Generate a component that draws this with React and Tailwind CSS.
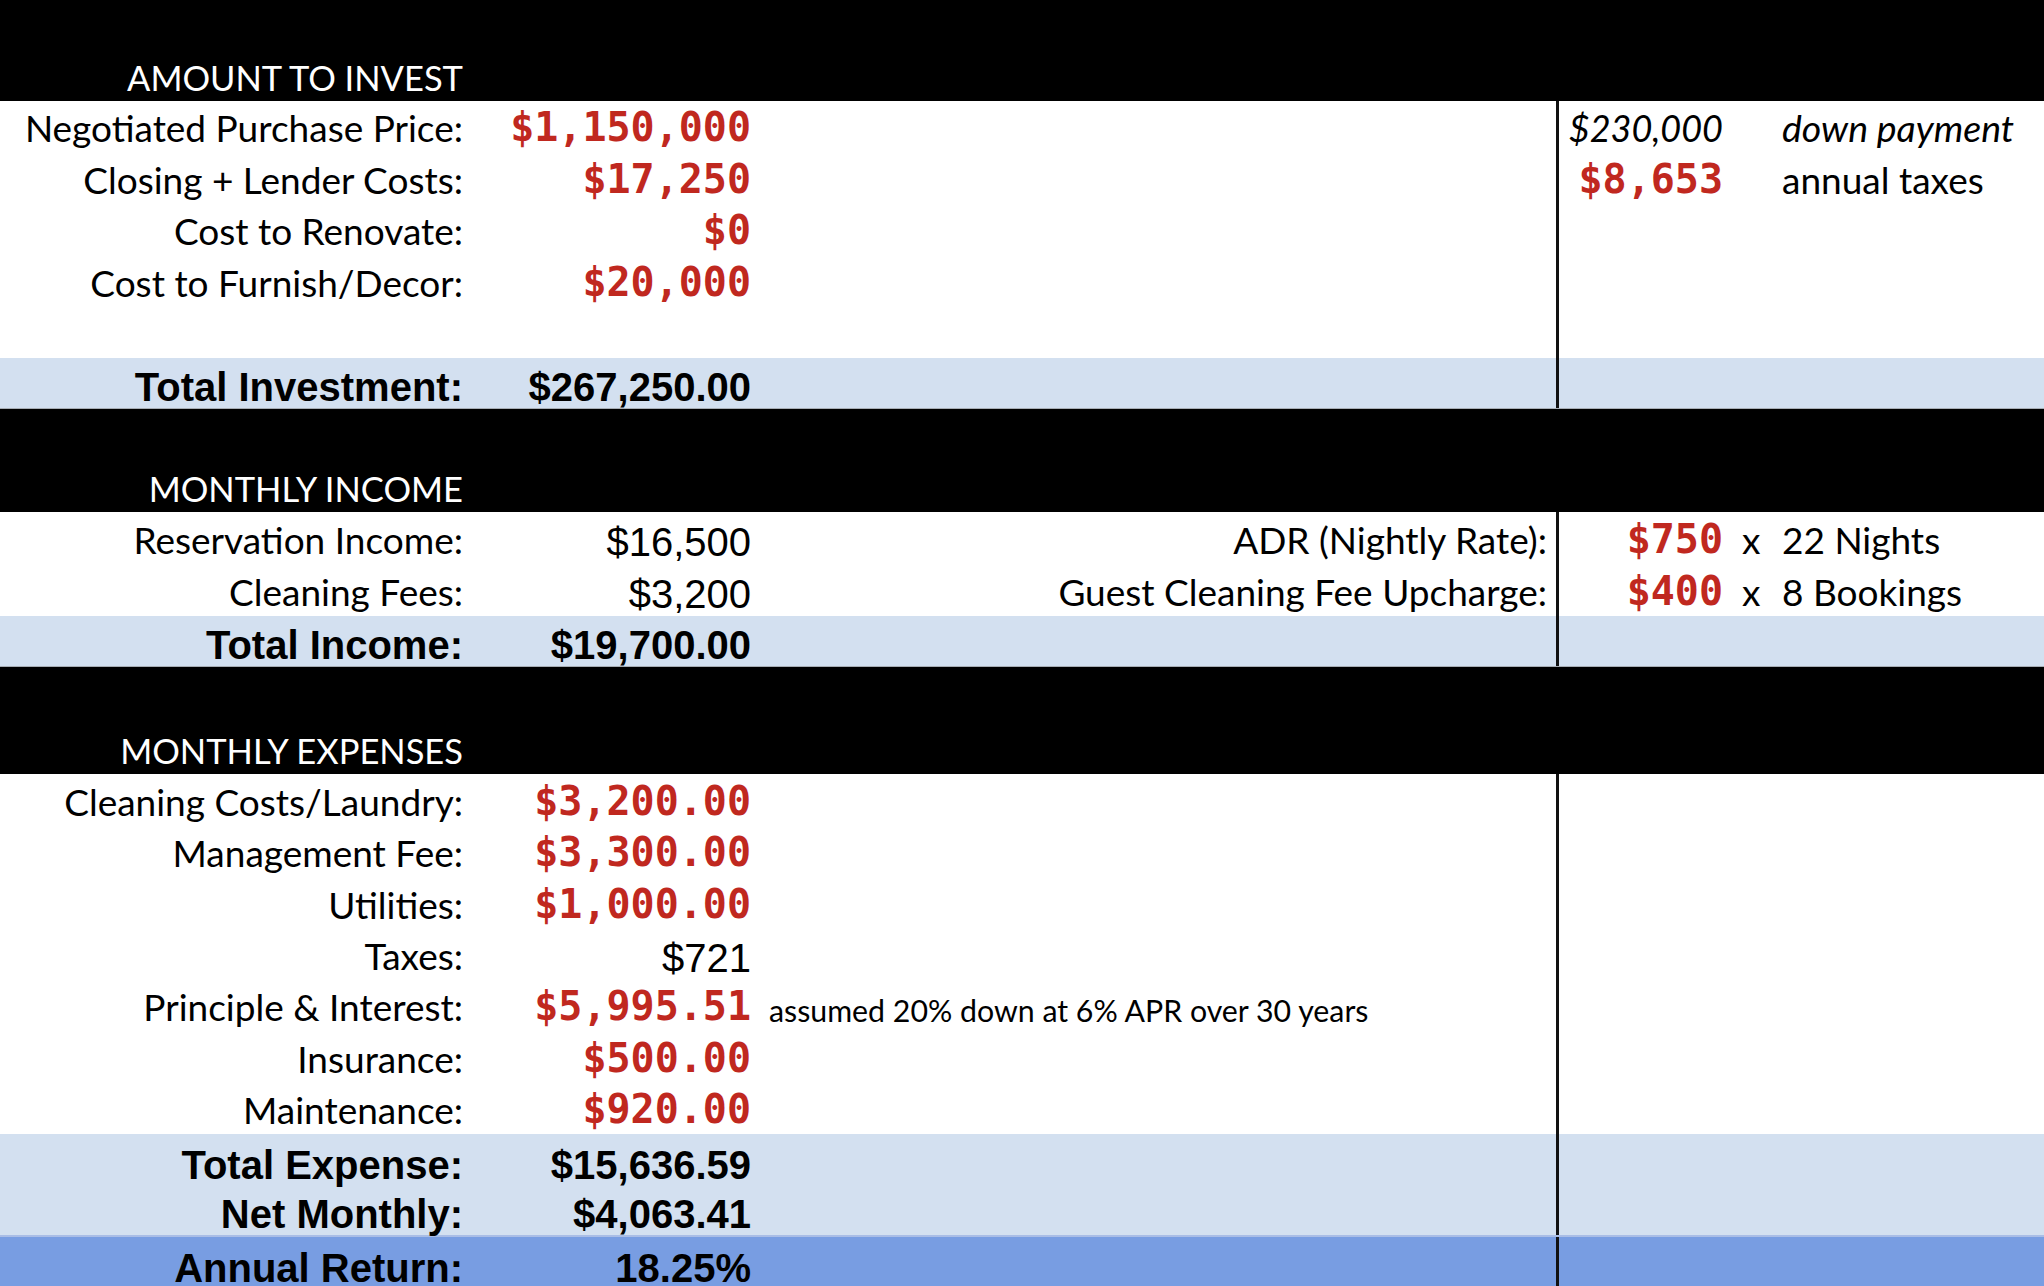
import React from 'react';

// spreadsheet-like investment summary
const cal = "font-['Lato',sans-serif] text-[37px]";
const mono = "font-['DejaVu_Sans_Mono',monospace] font-bold text-[40px] text-[#c0281f] mb-[5px]";
const ari = "font-['Liberation_Sans',Arial,sans-serif] text-[40px]";

const Cell = ({ className = '', children }) => (
  <div className={`flex h-full items-end leading-none whitespace-nowrap ${className}`}>{children}</div>
);

const Row = ({ h = 'h-[51.4px]', bg = 'bg-white', a, b, c, cRight, d, e, f, line }) => (
  <div className={`grid grid-cols-[475px_285px_796px_3px_174px_39px_1fr] ${h} ${bg} ${line || ''}`}>
    <Cell className="justify-end pr-[12px]">{a}</Cell>
    <Cell className="justify-end pr-[9px]">{b}</Cell>
    <Cell className={cRight ? 'justify-end pr-[9px]' : 'justify-start pl-[9px]'}>{c}</Cell>
    <div className="h-full bg-[#111]"></div>
    <Cell className="justify-end pr-[10px]">{d}</Cell>
    <Cell className="justify-start pl-[9px]">{e}</Cell>
    <Cell className="justify-start pl-[10px]">{f}</Cell>
  </div>
);

const Header = ({ top, bottom, title }) => (
  <div className="bg-black">
    <div className={top}></div>
    <div className={`${bottom} flex items-end justify-end w-[475px] pr-[12px] pb-[6px]`}>
      <span className="font-['Lato',sans-serif] text-[34.5px] leading-none text-white">{title}</span>
    </div>
  </div>
);

const Label = ({ children }) => <span className={`${cal} mb-[6px] text-black`}>{children}</span>;
const Italic = ({ size = 'text-[37.5px]', children }) => (
  <span className={`font-['Lato',sans-serif] ${size} mb-[6px] italic text-black`}>{children}</span>
);
const Red = ({ children }) => <span className={mono}>{children}</span>;
const Plain = ({ children }) => <span className={`${ari} mb-[2px] text-black`}>{children}</span>;
const BoldL = ({ children }) => <span className={`${ari} mb-[1px] font-bold text-black`}>{children}</span>;

const App = () => {
  const blue = 'bg-[#d3e0f0]';

  return (
    <div className="w-[2044px] h-[1286px] overflow-hidden bg-white">
      <Header top="h-[50px]" bottom="h-[51px]" title="AMOUNT TO INVEST" />
      <Row
        a={<Label>Negotiated Purchase Price:</Label>}
        b={<Red>$1,150,000</Red>}
        d={<Italic size="text-[36px]">$230,000</Italic>}
        f={<Italic>down payment</Italic>}
      />
      <Row
        a={<Label>Closing + Lender Costs:</Label>}
        b={<Red>$17,250</Red>}
        d={<Red>$8,653</Red>}
        f={<Label>annual taxes</Label>}
      />
      <Row a={<Label>Cost to Renovate:</Label>} b={<Red>$0</Red>} />
      <Row a={<Label>Cost to Furnish/Decor:</Label>} b={<Red>$20,000</Red>} />
      <Row />
      <Row
        bg={blue}
        line="border-b border-[#a7adb4]"
        a={<BoldL>Total Investment:</BoldL>}
        b={<BoldL>$267,250.00</BoldL>}
      />

      <Header top="h-[52px]" bottom="h-[51px]" title="MONTHLY INCOME" />
      <Row
        h="h-[51.7px]"
        a={<Label>Reservation Income:</Label>}
        b={<Plain>$16,500</Plain>}
        cRight
        c={<Label>ADR (Nightly Rate):</Label>}
        d={<Red>$750</Red>}
        e={<Label>x</Label>}
        f={<Label>22 Nights</Label>}
      />
      <Row
        h="h-[51.7px]"
        a={<Label>Cleaning Fees:</Label>}
        b={<Plain>$3,200</Plain>}
        cRight
        c={<Label>Guest Cleaning Fee Upcharge:</Label>}
        d={<Red>$400</Red>}
        e={<Label>x</Label>}
        f={<Label>8 Bookings</Label>}
      />
      <Row
        h="h-[51.7px]"
        bg={blue}
        line="border-b border-[#a7adb4]"
        a={<BoldL>Total Income:</BoldL>}
        b={<BoldL>$19,700.00</BoldL>}
      />

      <Header top="h-[53px]" bottom="h-[54px]" title="MONTHLY EXPENSES" />
      <Row a={<Label>Cleaning Costs/Laundry:</Label>} b={<Red>$3,200.00</Red>} />
      <Row a={<Label>Management Fee:</Label>} b={<Red>$3,300.00</Red>} />
      <Row a={<Label>Utilities:</Label>} b={<Red>$1,000.00</Red>} />
      <Row a={<Label>Taxes:</Label>} b={<Plain>$721</Plain>} />
      <Row
        a={<Label>Principle &amp; Interest:</Label>}
        b={<Red>$5,995.51</Red>}
        c={<span className="font-['Lato',sans-serif] text-[30.3px] mb-[6px] text-black">assumed 20% down at 6% APR over 30 years</span>}
      />
      <Row a={<Label>Insurance:</Label>} b={<Red>$500.00</Red>} />
      <Row a={<Label>Maintenance:</Label>} b={<Red>$920.00</Red>} />
      <Row h="h-[51.5px]" bg={blue} a={<BoldL>Total Expense:</BoldL>} b={<BoldL>$15,636.59</BoldL>} />
      <Row
        h="h-[51.5px]"
        bg={blue}
        line="border-b-2 border-[#a9bde6]"
        a={<BoldL>Net Monthly:</BoldL>}
        b={<BoldL>$4,063.41</BoldL>}
      />
      <Row h="h-[52px]" bg="bg-[#789de2]" a={<BoldL>Annual Return:</BoldL>} b={<BoldL>18.25%</BoldL>} />
    </div>
  );
};

export default App;
